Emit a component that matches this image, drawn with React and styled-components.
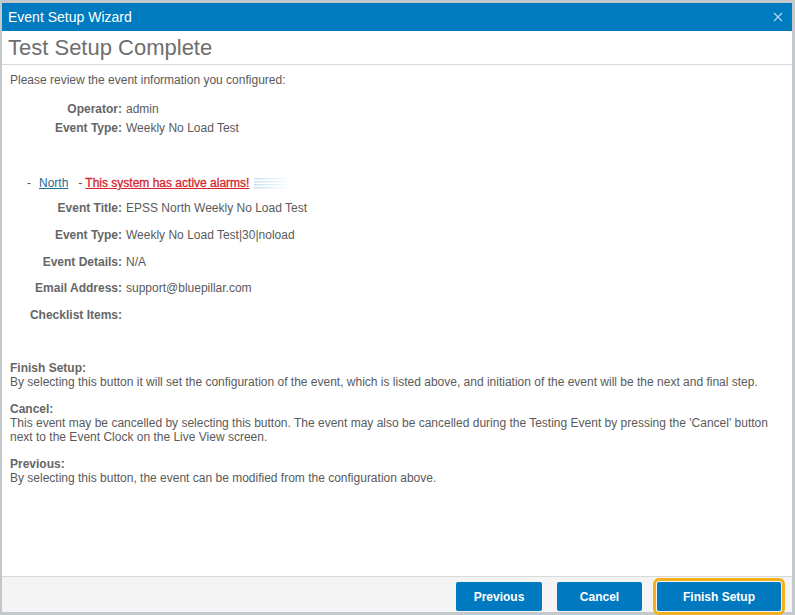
import React from 'react';
import styled, { createGlobalStyle } from 'styled-components';

const GlobalStyle = createGlobalStyle`
  html, body { margin: 0; padding: 0; }
  body {
    font-family: "Liberation Sans", Arial, sans-serif;
    background: #c3c8ca;
  }
`;

const Frame = styled.div`
  box-sizing: border-box;
  width: 795px;
  height: 615px;
  border-style: solid;
  border-color: #c3c8ca;
  border-width: 3px 3px 3px 2px;
  display: flex;
  flex-direction: column;
  background: #fff;
`;

const Header = styled.div`
  height: 28px;
  background: #007bbf;
  color: #fff;
  display: flex;
  align-items: center;
  justify-content: space-between;
  padding: 0 9px 0 6px;
  font-size: 14px;
`;

const TitleRow = styled.div`
  height: 33px;
  border-bottom: 1px solid #d9d9d9;
  display: flex;
  align-items: center;
  padding-left: 6px;
  font-size: 22px;
  color: #6e6e6e;
`;

const Body = styled.div`
  flex: 1;
  padding: 8px 8px 0 8px;
  font-size: 12px;
  color: #5a5a5a;
`;

const Intro = styled.div`
  line-height: 14px;
`;

const Fields = styled.div`
  display: grid;
  grid-template-columns: 112px auto;
  column-gap: 4px;
  row-gap: ${(p) => p.gap}px;
  margin-top: ${(p) => p.top}px;
  align-items: center;
  line-height: 14px;
`;

const Label = styled.div`
  text-align: right;
  font-weight: bold;
  color: #666;
`;

const Value = styled.div``;

const SystemRow = styled.div`
  display: flex;
  align-items: center;
  margin-top: 41px;
  padding-left: 17px;
  line-height: 14px;
`;

const Dash = styled.span`
  color: #555;
  margin-right: ${(p) => p.gap}px;
`;

const SysLink = styled.a`
  color: #1a6d93;
  text-decoration: underline;
  margin-right: 10px;
`;

const Alarm = styled.span`
  color: #d4262e;
  text-decoration: underline;
  -webkit-text-stroke: 0.3px #d4262e;
  margin-right: 5px;
`;

const Notes = styled.div`
  margin-top: 39px;
  display: flex;
  flex-direction: column;
  gap: 13px;
  line-height: 14px;
`;

const NoteTitle = styled.div`
  font-weight: bold;
  color: #666;
`;

const Footer = styled.div`
  height: 35px;
  border-top: 1px solid #d9d9d9;
  background: #f4f4f4;
  display: flex;
  justify-content: flex-end;
  align-items: flex-end;
  gap: 15px;
  padding-right: 11px;
`;

const Button = styled.button`
  box-sizing: border-box;
  width: ${(p) => p.w}px;
  height: 29px;
  margin-bottom: 1px;
  background: #0079c1;
  color: #fff;
  border: none;
  border-radius: 2px;
  font-family: inherit;
  font-size: 12px;
  font-weight: bold;
  outline: ${(p) => (p.focus ? '3px solid #f2b01a' : 'none')};
  outline-offset: 1px;
`;

function CloseIcon() {
  return (
    <svg width="10" height="10" viewBox="0 0 10 10">
      <path d="M1 1 L9 9 M9 1 L1 9" stroke="#b5dcf0" strokeWidth="1.1" />
    </svg>
  );
}

function Stripes() {
  return (
    <svg width="36" height="12" viewBox="0 0 36 12">
      <defs>
        <linearGradient id="fade" x1="0" x2="1" y1="0" y2="0">
          <stop offset="0" stopColor="#c4e2f1" />
          <stop offset="1" stopColor="#ffffff" />
        </linearGradient>
      </defs>
      {[1, 4, 7, 10].map((y) => (
        <rect key={y} x="0" y={y} width="36" height="1.5" fill="url(#fade)" />
      ))}
    </svg>
  );
}

const general = [
  ['Operator:', 'admin'],
  ['Event Type:', 'Weekly No Load Test'],
];

const system = [
  ['Event Title:', 'EPSS North Weekly No Load Test'],
  ['Event Type:', 'Weekly No Load Test|30|noload'],
  ['Event Details:', 'N/A'],
  ['Email Address:', 'support@bluepillar.com'],
  ['Checklist Items:', ''],
];

const notes = [
  ['Finish Setup:', 'By selecting this button it will set the configuration of the event, which is listed above, and initiation of the event will be the next and final step.'],
  ['Cancel:', "This event may be cancelled by selecting this button. The event may also be cancelled during the Testing Event by pressing the 'Cancel' button next to the Event Clock on the Live View screen."],
  ['Previous:', 'By selecting this button, the event can be modified from the configuration above.'],
];

export default function App() {
  return (
    <Frame>
      <GlobalStyle />
      <Header>
        <span>Event Setup Wizard</span>
        <CloseIcon />
      </Header>
      <TitleRow>Test Setup Complete</TitleRow>
      <Body>
        <Intro>Please review the event information you configured:</Intro>
        <Fields gap={5} top={15}>
          {general.map(([l, v], i) => (
            <React.Fragment key={i}>
              <Label>{l}</Label>
              <Value>{v}</Value>
            </React.Fragment>
          ))}
        </Fields>
        <SystemRow>
          <Dash gap={8}>-</Dash>
          <SysLink href="#">North</SysLink>
          <Dash gap={3}>-</Dash>
          <Alarm>This system has active alarms!</Alarm>
          <Stripes />
        </SystemRow>
        <Fields gap={12.75} top={11}>
          {system.map(([l, v], i) => (
            <React.Fragment key={i}>
              <Label>{l}</Label>
              <Value>{v}</Value>
            </React.Fragment>
          ))}
        </Fields>
        <Notes>
          {notes.map(([t, d]) => (
            <div key={t}>
              <NoteTitle>{t}</NoteTitle>
              <div>{d}</div>
            </div>
          ))}
        </Notes>
      </Body>
      <Footer>
        <Button w={86}>Previous</Button>
        <Button w={85}>Cancel</Button>
        <Button w={124} focus>Finish Setup</Button>
      </Footer>
    </Frame>
  );
}
